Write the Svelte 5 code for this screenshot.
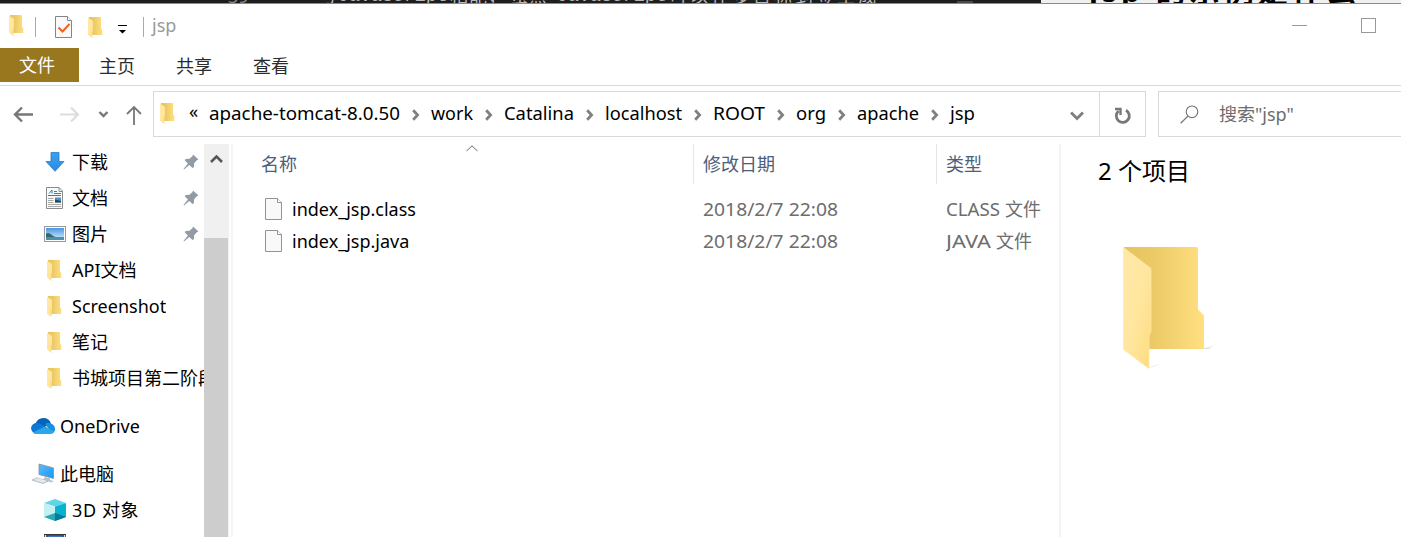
<script>
  const tabs = ['主页', '共享', '查看'];
  const crumbs = [
    { name: 'apache-tomcat-8.0.50', w: 191 },
    { name: 'work', w: 42 },
    { name: 'Catalina', w: 70 },
    { name: 'localhost', w: 77 },
    { name: 'ROOT', w: 52 },
    { name: 'org', w: 30 },
    { name: 'apache', w: 62 },
    { name: 'jsp', w: 25 }
  ];
  const nav = [
    { icon: 'download', label: '下载', pin: true },
    { icon: 'document', label: '文档', pin: true },
    { icon: 'picture', label: '图片', pin: true },
    { icon: 'folder', label: 'API文档' },
    { icon: 'folder', label: 'Screenshot' },
    { icon: 'folder', label: '笔记' },
    { icon: 'folder', label: '书城项目第二阶段' },
    { icon: 'cloud', label: 'OneDrive', root: true },
    { icon: 'pc', label: '此电脑', root: true },
    { icon: 'cube', label: '3D 对象' },
    { icon: 'video', label: '' }
  ];
  const files = [
    { name: 'index_jsp.class', date: '2018/2/7 22:08', kind: 'CLASS', kw: 54 },
    { name: 'index_jsp.java', date: '2018/2/7 22:08', kind: 'JAVA', kw: 45 }
  ];
</script>

{#snippet folder()}
  <svg class="folder" width="15" height="22" viewBox="0 0 15 22">
    <path d="M1 0H12.4Q13 0 13 .6V11.5L14.3 13V18H1Z" fill="url(#back)" />
    <path d="M0 .4L5 4V13.5L4.5 14V21L0 17.8Z" fill="url(#flap)" />
  </svg>
{/snippet}

{#snippet sheet()}
  <svg width="18" height="23" viewBox="0 0 18 23">
    <path d="M.5.5H12.5L16.5 4.5V21.5H.5Z" fill="#f8f9fa" stroke="#929292" />
    <path d="M12.5.5V4.5H16.5" fill="#fff" stroke="#929292" />
  </svg>
{/snippet}

<svg class="defs" width="0" height="0">
  <defs>
    <linearGradient id="back"><stop offset="0" stop-color="#e6c35c" /><stop offset=".35" stop-color="#ebc966" /><stop offset="1" stop-color="#ffdf80" /></linearGradient>
    <linearGradient id="flap" x2="1" y2="1"><stop offset="0" stop-color="#ffe9a8" /><stop offset=".5" stop-color="#ffe7a0" /><stop offset="1" stop-color="#ffdb7d" /></linearGradient>
    <linearGradient id="shade"><stop offset="0" stop-color="#aaa" stop-opacity=".7" /><stop offset="1" stop-color="#ddd" stop-opacity="0" /></linearGradient>
    <linearGradient id="arrow" x2="0" y2="1"><stop offset="0" stop-color="#3ba1ee" /><stop offset="1" stop-color="#2c8ce0" /></linearGradient>
    <linearGradient id="sky" x2="0" y2="1"><stop offset="0" stop-color="#4b96e2" /><stop offset="1" stop-color="#d9f2fa" /></linearGradient>
    <linearGradient id="screen" x2="1" y2="1"><stop offset="0" stop-color="#5dbcff" /><stop offset="1" stop-color="#1598f5" /></linearGradient>
  </defs>
</svg>

<main>
  <div class="behind">
    <div class="editor">
      <span class="lineno">39</span>
      <span class="code"><i>与</i><b>JavaScript</b><i>相能，</i></span>
      <span class="code second"><i>虽然</i><b>JavaScript</b><i>可以在多目标到签生成</i></span>
      <span class="minimap"></span>
    </div>
    <div class="article">jsp 的示例是什么</div>
  </div>

  <header>
    {@render folder()}
    <span class="bar"></span>
    <svg class="check" width="18" height="23" viewBox="0 0 18 23">
      <path d="M.5.5H12.5L16.5 4.5V21.5H.5Z" fill="#f8f9fa" stroke="#858585" />
      <path d="M12.5.5V4.5H16.5" fill="#fff" stroke="#858585" />
      <path d="M3.5 11.5L7.5 15.5L14.5 8" fill="none" stroke="#f4611e" stroke-width="2" />
    </svg>
    <span class="quick">{@render folder()}</span>
    <svg class="custom" width="10" height="9" viewBox="0 0 10 9"><path d="M0 0H9V1H0ZM1 5H8L4.5 8.5Z" /></svg>
    <span class="bar last"></span>
    <span class="title">jsp</span>
    <svg class="min" width="15" height="15"><path d="M0 7.5H15" stroke="#999" /></svg>
    <svg class="max" width="15" height="15"><rect x=".5" y=".5" width="14" height="14" fill="none" stroke="#999" /></svg>
  </header>

  <nav class="ribbon">
    <span class="file">文件</span>
    {#each tabs as t}<span class="tab">{t}</span>{/each}
  </nav>

  <div class="address">
    <svg class="arrows" width="153" height="46" viewBox="0 0 153 46" fill="none" stroke-width="2">
      <path d="M33 23.5H15M22 16.5L15 23.5L22 30.5" stroke="#777" stroke-width="2.4" />
      <path d="M60 23.5H78M71 16.5L78 23.5L71 30.5" stroke="#ddd" stroke-width="2.2" />
      <path d="M99.500 21L103.500 25L107.500 21" stroke="#777" stroke-width="2.4" />
      <path d="M134 34V16M127 23L134 16L141 23" stroke="#777" stroke-width="1.8" />
    </svg>
    <div class="path">
      {@render folder()}
      <span class="more">«</span>
      {#each crumbs as c, i}
        {#if i}
          <svg class="sep" width="8" height="12" viewBox="0 0 8 12"><path d="M1.200 1.200L5.600 6L1.200 10.800" fill="none" stroke="#808080" stroke-width="2.800" /></svg>
        {/if}
        <svg class="crumb" width={c.w} height="28"><text x="0" y="20" textLength={c.w} lengthAdjust="spacingAndGlyphs">{c.name}</text></svg>
      {/each}
      <svg class="drop" width="14" height="10" viewBox="0 0 14 10"><path d="M1 1.500L7 7.500L13 1.500" fill="none" stroke="#808080" stroke-width="3" /></svg>
      <div class="refresh">
        <svg width="18" height="18" viewBox="0 0 18 18" fill="none" stroke="#777" stroke-width="2.800"><path d="M12 3.200A6.500 6.500 0 1 1 4.500 4" /><path d="M1 2H6.500V8" stroke-width="2.400" /></svg>
      </div>
    </div>
    <div class="search">
      <svg width="19" height="19" viewBox="0 0 19 19" fill="none" stroke="#777" stroke-width="1.2"><circle cx="12" cy="6.8" r="5.8" /><path d="M8 11L.7 18.2" /></svg>
      <span>搜索"jsp"</span>
    </div>
  </div>

  <section class="body">
    <aside>
      {#each nav as n}
        <div class="item" class:root={n.root}>
          <span class="ico">
            {#if n.icon === 'folder'}
              {@render folder()}
            {:else if n.icon === 'download'}
              <svg width="20" height="20" viewBox="0 0 20 20"><path d="M6 .5H14V9.5H19L10 19.3L1 9.5H6Z" fill="url(#arrow)" stroke="#277cc8" stroke-width=".8" /></svg>
            {:else if n.icon === 'document'}
              <svg width="18" height="23" viewBox="0 0 18 23">
                <path d="M.5.5H13L16.500 4V21.500H.5Z" fill="#fafafa" stroke="#8b8b8b" /><path d="M13 .5V4.500H16.500" fill="none" stroke="#8b8b8b" />
                <path d="M3 6.500L6 3V6.500M8 4.500H11M8 6.500H15" stroke="#1688d4" fill="none" /><path d="M2 8.500H15" stroke="#1688d4" />
                <path d="M2 11.500H7.500M2 13.500H7.500M2 15.500H7.500M2 17.500H15M2 19.500H15" stroke="#aaa" /><path d="M9 10.500H15V15.500H9Z" fill="#4f91ca" /><path d="M9 12.500L15 14V15.500H9Z" fill="#28484c" />
              </svg>
            {:else if n.icon === 'picture'}
              <svg width="22" height="16" viewBox="0 0 22 16">
                <rect x=".5" y=".5" width="21" height="15" fill="#fff" stroke="#999" /><path d="M2 2H20V14H2Z" fill="url(#sky)" />
                <path d="M2 7.500Q5 6 8 9T19 11L15 11.500H2Z" fill="#356b61" /><path d="M2 11H20V14H2Z" fill="#4b8fb3" />
              </svg>
            {:else if n.icon === 'cloud'}
              <svg width="24" height="16" viewBox="0 0 24 16">
                <path d="M4 7Q6 0 12.5 0Q18 0 20 5.5L12 10Z" fill="#0364b8" /><path d="M14 6Q17 4 20 5.5Q24 7 24 11Q24 14 21 15.5Z" fill="#1490df" />
                <path d="M3 15Q0 13 0 10Q1 5 6 5Q8.500 5 11 6.500L19 12Z" fill="#0f78d4" /><path d="M2 14.500L14 8.500L23 13.500Q22 16 19 16H5Q3 16 2 14.500Z" fill="#28a8ea" />
              </svg>
            {:else if n.icon === 'pc'}
              <svg width="24" height="22" viewBox="0 0 24 22">
                <path d="M8 1L22.500 5V15.500L8 11.500Z" fill="url(#screen)" stroke="#8b969e" stroke-width=".9" /><path d="M14 14L19 15.500V17L23 18L20 19.500L12 16.500Z" fill="#b9c4ca" />
                <path d="M6 14.800L17 18.200L12 20.500L1 17Z" fill="#d0d6da" stroke="#a9b2b8" stroke-width=".7" /><path d="M4 16.500L13 19M6 15.700L15 18.200" stroke="#fff" stroke-width=".7" />
              </svg>
            {:else if n.icon === 'cube'}
              <svg width="22" height="22" viewBox="0 0 22 22">
                <path d="M11 0L22 4L11 7.500L0 4Z" fill="#61d5e7" /><path d="M0 4L11 7.500V22L0 18Z" fill="#c5f0f2" /><path d="M22 4L11 7.500V22L22 18Z" fill="#08b2d1" />
                <path d="M0 18L11 14V22Z" fill="#27a9b8" /><path d="M22 18L11 14V22Z" fill="#057a91" />
              </svg>
            {:else}
              <svg width="22" height="24" viewBox="0 0 22 24"><rect width="22" height="24" fill="#333" /><path d="M3.500 1.500H18.500V24H3.500Z" fill="#4472c4" /><path d="M1.500 1V24M20.500 1V24" stroke="#ddd" stroke-width="1.500" stroke-dasharray="2 1.500" /></svg>
            {/if}
          </span>
          <span class="label" class:wide={n.icon === 'cube'}>{n.label}</span>
          {#if n.pin}
            <svg class="pin" width="16" height="16" viewBox="0 0 16 16"><path d="M10 .5L15.500 5.500L13.500 6.500L11 9.500V13L9.500 14L6.300 10.900L1 15.500L.5 15L4.900 9.600L1.500 6L3 5L6.500 4.800L9.500 2Z" fill="#929ba4" /></svg>
          {/if}
        </div>
      {/each}
    </aside>
    <div class="scroll">
      <svg width="25" height="94" viewBox="0 0 25 94"><path d="M7 18L12.500 12.500L18 18" fill="none" stroke="#555" stroke-width="2.600" /></svg>
      <div class="thumb"></div>
    </div>
    <div class="list">
      <div class="row head">
        <span class="c1">名称</span><span class="c2">修改日期</span><span class="c3">类型</span>
        <svg class="sort" width="12" height="7" viewBox="0 0 12 7"><path d="M.5 6L6 .8L11.500 6" fill="none" stroke="#666" /></svg>
      </div>
      {#each files as f}
        <div class="row">
          <span class="c1">{@render sheet()}<span>{f.name}</span></span>
          <span class="c2"><svg width="135" height="28"><text y="21" textLength="135" lengthAdjust="spacingAndGlyphs">{f.date}</text></svg></span>
          <span class="c3"><svg width={f.kw} height="28"><text y="21" textLength={f.kw} lengthAdjust="spacingAndGlyphs">{f.kind}</text></svg>文件</span>
        </div>
      {/each}
    </div>
    <div class="preview">
      <h1>2 个项目</h1>
      <svg width="94" height="126" viewBox="0 0 94 126">
        <path d="M80 102L92 97.500L87 102Z" fill="url(#shade)" /><path d="M25 121L38 116L33 119Z" fill="url(#shade)" />
        <path d="M1 0H73Q75 0 75 2V62.500L81 68.500V101Q81 102 80 102H1Z" fill="url(#back)" />
        <path d="M.5.5L28 21.500V84L26 89V120.500Q26 122 25 121L.5 102.500Z" fill="url(#flap)" stroke="#ffe9ae" stroke-width=".7" />
      </svg>
    </div>
  </section>
</main>

<style>
  main {
    width: 1401px; height: 537px; overflow: hidden; display: flex; flex-direction: column;
    background: #fff; color: #000; font: 18px/28px "Noto Sans", "Noto Sans CJK SC", sans-serif;
  }
  svg { display: block; flex: none; }
  svg text { fill: currentColor; }
  .defs { position: absolute; }
  .behind { height: 4px; flex: none; box-sizing: border-box; border-bottom: 1px solid #8b8b8b; display: flex; overflow: hidden; }
  .editor { width: 1041px; height: 3px; background: #1e1e1e; color: #b9b9b9; display: flex; align-items: flex-end; white-space: nowrap; line-height: 18px; }
  .editor span { margin-bottom: -2px; }
  .editor .lineno { width: 90px; margin-left: 228px; color: #888; }
  .code { display: flex; width: 193px; }
  .code i { font-style: normal; width: 20px; flex: none; }
  .code i:last-child { letter-spacing: 1px; }
  .code b { font: 18.300px/18px "Liberation Mono", monospace; width: 112px; }
  .code.second { width: 446px; }
  .code.second i:first-child { width: 46px; }
  .code.second i:last-child { letter-spacing: 3px; }
  .editor .minimap { width: 16px; height: 2px; margin: 0; background: #4a4a4a; }
  .article { flex: 1; background: #f0f0f0; padding-left: 48px; font-size: 30px; letter-spacing: 4px; font-weight: 700; line-height: 34px; height: 34px; margin-top: -26px; white-space: nowrap; }

  header { height: 44px; flex: none; display: flex; align-items: flex-start; padding: 11px 25px 0 9px; box-sizing: border-box; color: #999; }
  .bar { width: 1px; height: 20px; background: #aaa; margin: 2px 0 0 11px; }
  .check { margin: 1px 0 0 19px; }
  .quick { margin: 2px 0 0 15px; }
  .custom { margin: 10px 0 0 15px; fill: #000; }
  .bar.last { margin-left: 15px; }
  .title { margin: -4px 0 0 8px; flex: 1; }
  .min { margin: 3px 54px 0 0; }
  .max { margin-top: 3px; }

  .ribbon { height: 38px; flex: none; box-sizing: border-box; border-bottom: 1px solid #d9d9d9; display: flex; gap: 41px; color: #2b2b2b; line-height: 36px; }
  .file { width: 60px; height: 34px; line-height: 34px; padding-left: 19px; margin-right: -21px; background: #99771f; color: #fff; }

  .address { height: 58px; flex: none; display: flex; padding-top: 5px; box-sizing: border-box; }
  .path { width: 993px; height: 46px; box-sizing: border-box; border: 1px solid #d9d9d9; display: flex; align-items: center; padding-left: 6px; }
  .path .folder { margin-top: -1px; }
  .more { margin: -6px 11px 0 14px; width: 9px; }
  .crumb { overflow: visible; }
  .crumb text { font-size: 18px; }
  .sep { margin: 1px 11px 0 12px; }
  .drop { margin: 3px 15px 0 auto; }
  .refresh { width: 46px; height: 44px; border-left: 1px solid #d9d9d9; display: flex; align-items: center; justify-content: center; padding-top: 3px; box-sizing: border-box; }
  .search { flex: 1; margin-left: 12px; height: 46px; box-sizing: border-box; border: 1px solid #d9d9d9; border-right: 0; padding-left: 21px; display: flex; align-items: center; gap: 20px; color: #6d6d6d; }

  .body { flex: 1; min-height: 0; display: flex; }
  aside { width: 204px; flex: none; overflow: hidden; }
  .item { height: 36px; display: flex; align-items: center; padding-left: 43px; box-sizing: border-box; white-space: nowrap; }
  .item.root { padding-left: 31px; margin-top: 12px; }
  .ico { width: 24px; margin-right: 5px; flex: none; display: flex; justify-content: center; }
  .ico .folder { margin: 2px 2px 0 0; }
  .label { overflow: hidden; }
  .wide { letter-spacing: .6px; }
  .pin { margin-left: auto; margin-right: 5px; }
  .scroll { width: 25px; flex: none; background: #f0f0f0; position: relative; }
  .thumb { width: 24px; height: 300px; background: #cdcdcd; }
  .list { width: 826px; flex: none; margin-left: 2px; border: solid #f4f4f4; border-width: 0 2px; }
  .row { height: 32px; display: flex; align-items: center; color: #6d6d6d; position: relative; }
  .c1 { width: 460px; padding-left: 32px; box-sizing: border-box; color: #000; display: flex; align-items: center; gap: 9px; }
  .c2 { width: 243px; padding-left: 10px; box-sizing: border-box; }
  .c3 { padding-left: 10px; display: flex; gap: 5px; }
  .head { height: 41px; margin-bottom: 8px; color: #4c607a; align-items: stretch; line-height: 41px; }
  .head .c1 { padding-left: 28px; color: #4c607a; }
  .head .c2, .head .c3 { border-left: 1px solid #e5e5e5; height: 40px; padding-left: 9px; }
  .sort { position: absolute; left: 233px; top: 1px; }
  .preview { padding-left: 37px; }
  h1 { margin: 10px 0 0; font-size: 24px; line-height: 34px; font-weight: 400; white-space: nowrap; }
  .preview > svg { margin: 59px 0 0 25px; }
</style>
